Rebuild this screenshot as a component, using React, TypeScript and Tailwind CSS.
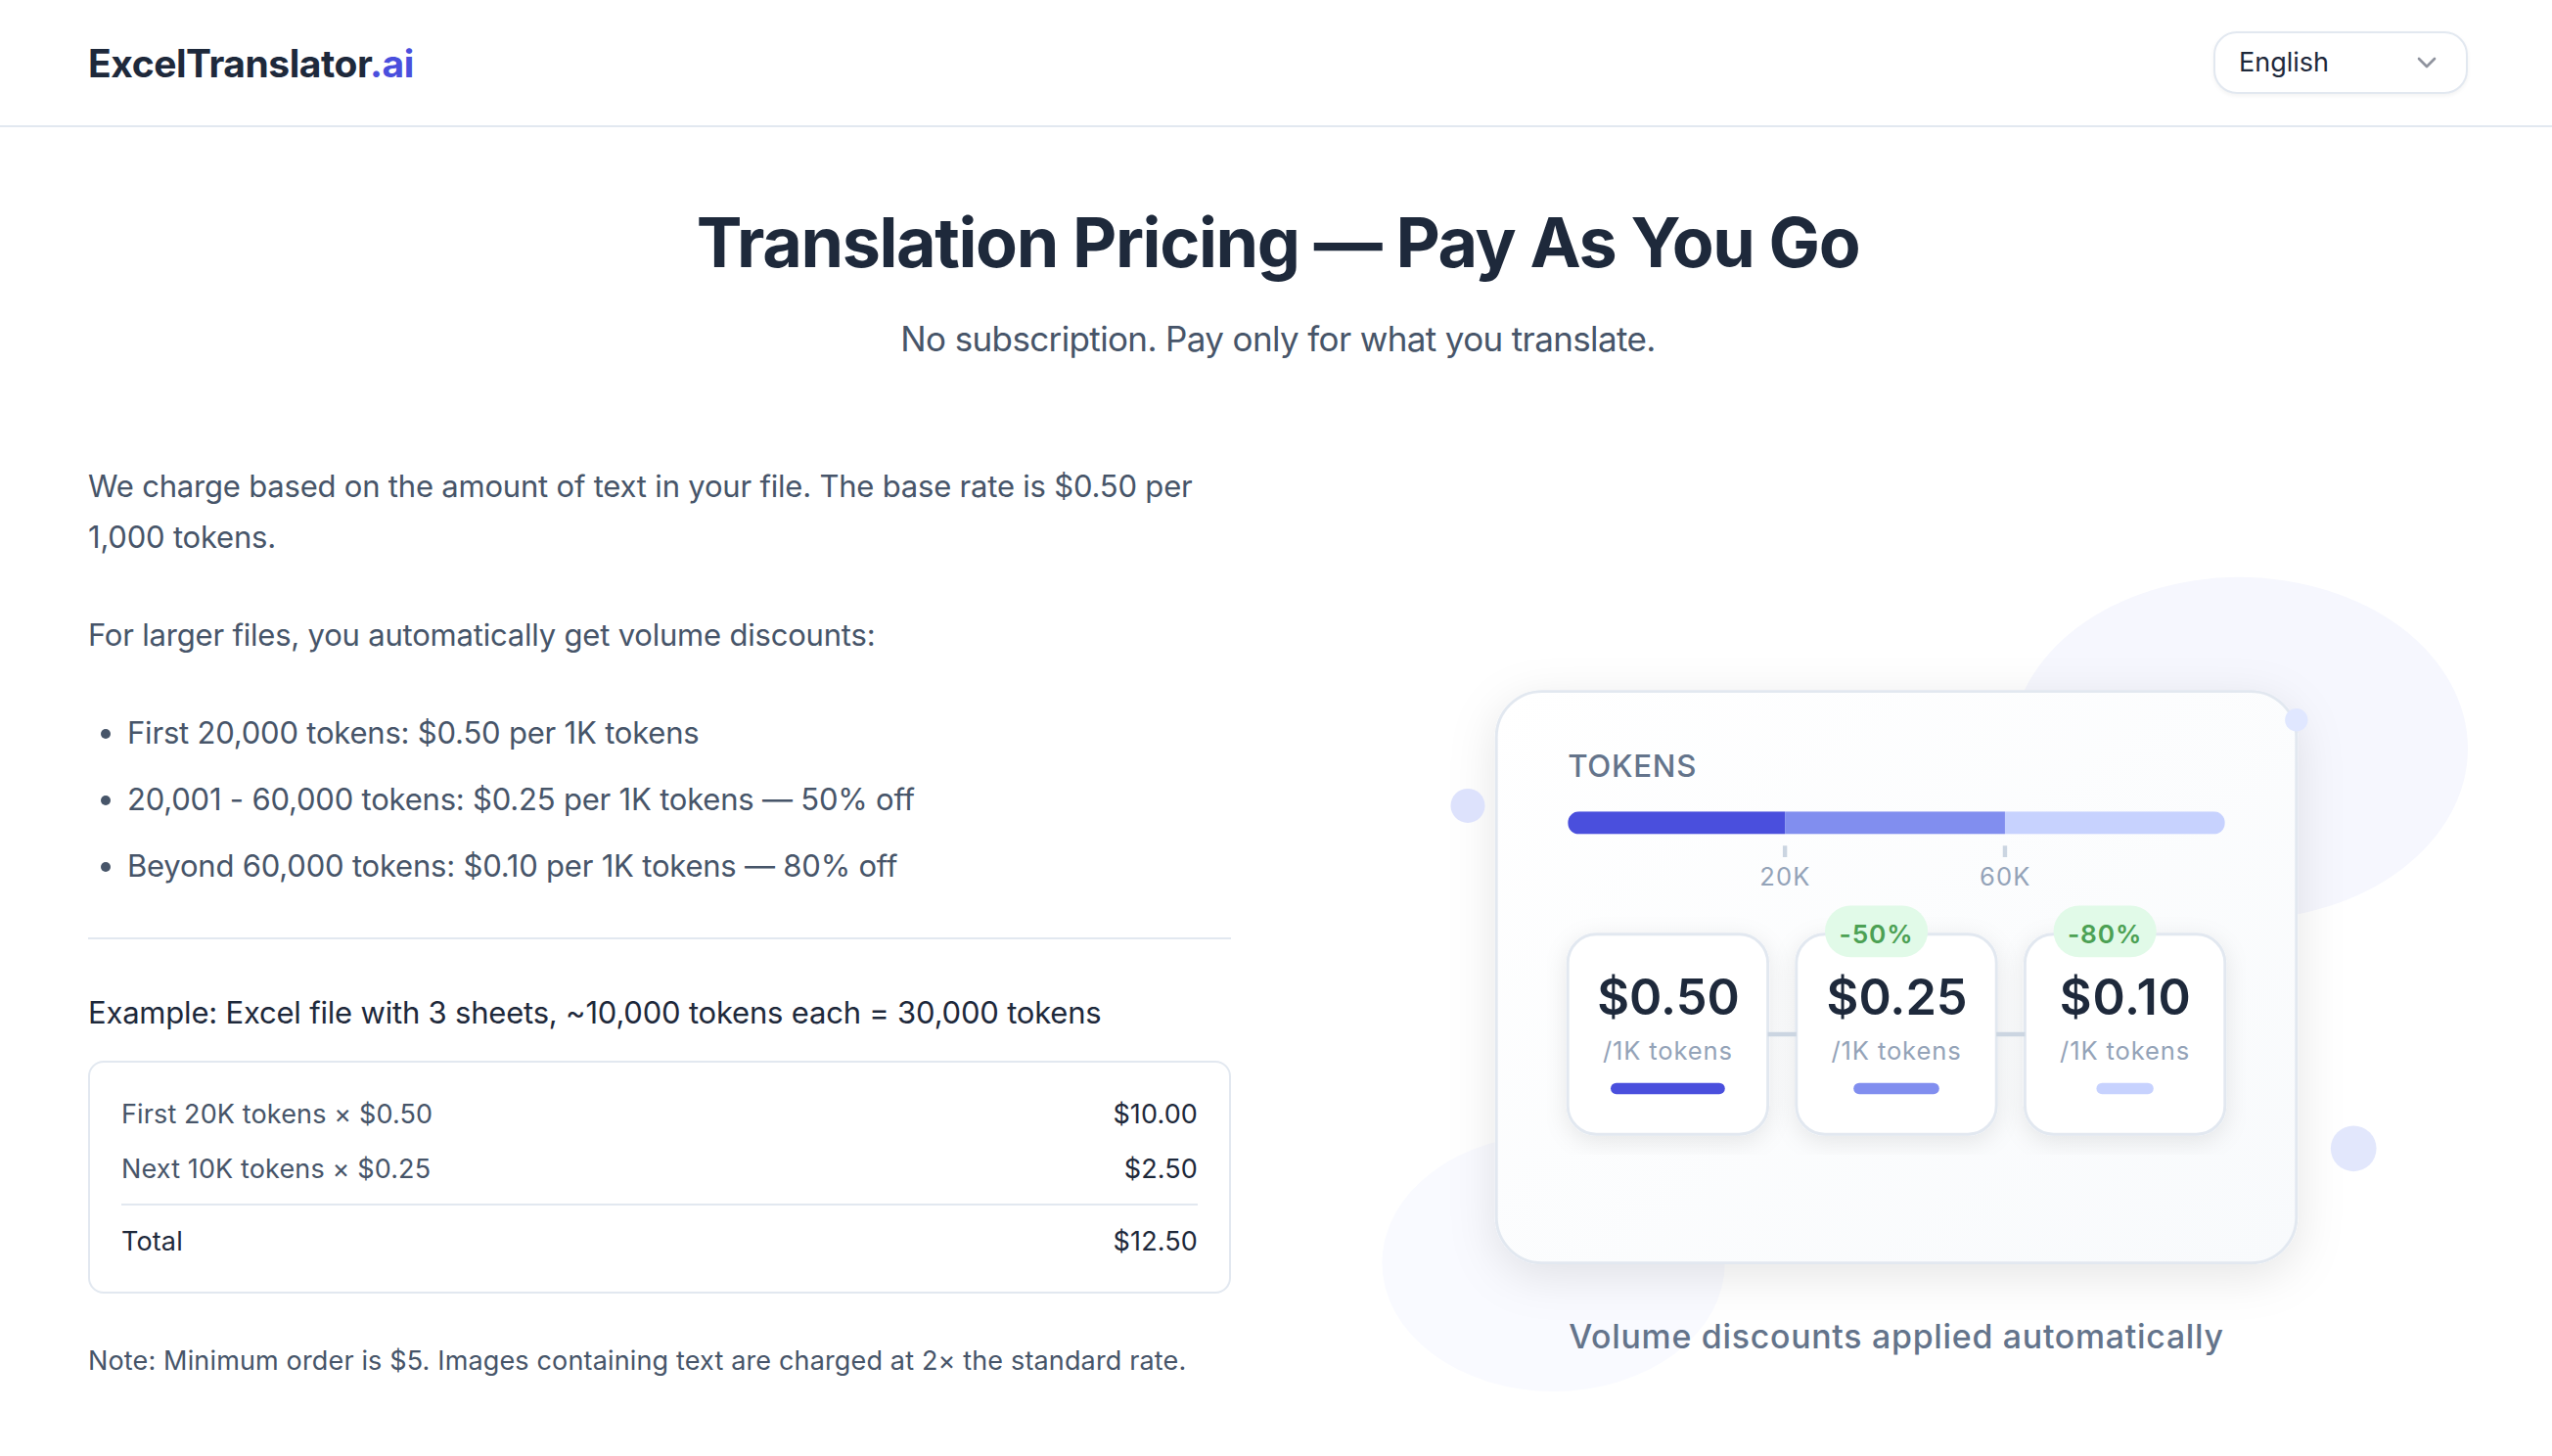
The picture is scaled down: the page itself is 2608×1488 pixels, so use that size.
import { ChevronDown } from 'lucide-react';

const tiers = [
  { x: 85, price: '$0.50', spacing: 0, bar: 40, color: '#4a4fdd', badge: null },
  { x: 165, price: '$0.25', spacing: 0, bar: 30, color: '#818eef', badge: '-50%' },
  { x: 245, price: '$0.10', spacing: 0.25, bar: 20, color: '#c7d2fe', badge: '-80%' },
];

const discounts = [
  'First 20,000 tokens: $0.50 per 1K tokens',
  '20,001 - 60,000 tokens: $0.25 per 1K tokens — 50% off',
  'Beyond 60,000 tokens: $0.10 per 1K tokens — 80% off',
];

function Header() {
  return (
    <header className="flex h-[130px] items-center justify-between border-b-2 border-[#e2e8f0] bg-white pl-[90px] pr-[86px]">
      <div className="pt-[1px] text-[39px] leading-[56px] font-bold tracking-[-0.45px] text-[#1e293b]">
        ExcelTranslator<span className="text-[#4a4fdd]">.ai</span>
      </div>
      <button className="flex h-16 w-[260px] items-center justify-between rounded-3xl border-2 border-[#e2e8f0] bg-white pr-6 pl-6 text-[27px] text-[#1e293b] shadow-[0_2px_4px_rgba(0,0,0,0.05)]">
        <span className="pt-px">English</span>
        <ChevronDown className="h-8 w-8 text-[#8f939e]" strokeWidth={2} />
      </button>
    </header>
  );
}

function PricingCopy() {
  return (
    <div className="text-[31px] leading-[52px] tracking-[-0.2px] text-[#475569]">
      <p>We charge based on the amount of text in your file. The base rate is $0.50 per 1,000 tokens.</p>
      <p className="mt-12">For larger files, you automatically get volume discounts:</p>
      <ul className="mt-12 flex list-disc flex-col gap-4 pl-10">
        {discounts.map((d) => (
          <li key={d}>{d}</li>
        ))}
      </ul>

      {/* Example */}
      <div className="mt-[47px] border-t-2 border-[#e2e8f0] pt-[49px]">
        <p className="text-[#1e293b]">Example: Excel file with 3 sheets, ~10,000 tokens each = 30,000 tokens</p>
        <div className="mt-[23px] flex flex-col gap-4 rounded-2xl border-2 border-[#e2e8f0] px-8 pt-[33px] pb-[31px] text-[27px] leading-10 tracking-[0.13px]">
          <div className="flex justify-between">
            <span>First 20K tokens × $0.50</span>
            <span className="text-[#1e293b]">$10.00</span>
          </div>
          <div className="flex justify-between">
            <span>Next 10K tokens × $0.25</span>
            <span className="text-[#1e293b]">$2.50</span>
          </div>
          <div className="-mt-px flex justify-between border-t-2 border-[#e2e8f0] pt-[17px] text-[#1e293b]">
            <span>Total</span>
            <span>$12.50</span>
          </div>
        </div>
      </div>

      <p className="mt-[49px] -mb-px text-[27px] leading-10 tracking-[0.15px]">
        Note: Minimum order is $5. Images containing text are charged at 2× the standard rate.
      </p>
    </div>
  );
}

function PricingIllustration() {
  return (
    <svg viewBox="0 0 400 320" className="mb-px w-full overflow-visible" fill="none">
      <defs>
        <linearGradient id="cardFill" x1="0" y1="0" x2="1" y2="1">
          <stop offset="0" stopColor="#ffffff" />
          <stop offset="1" stopColor="#f8fafc" />
        </linearGradient>
        <filter id="cardShadow">
          <feDropShadow dx="0" dy="4" stdDeviation="8" floodColor="#000" floodOpacity="0.1" />
        </filter>
        <filter id="tileShadow">
          <feDropShadow dx="0" dy="2" stdDeviation="4" floodColor="#000" floodOpacity="0.09" />
        </filter>
        <clipPath id="scale">
          <rect x="85" y="122" width="230" height="8" rx="4" />
        </clipPath>
      </defs>

      <ellipse cx="320" cy="100" rx="80" ry="60" fill="#f6f7fe" />
      <ellipse cx="80" cy="280" rx="60" ry="45" fill="#f9faff" />

      <rect x="60" y="80" width="280" height="200" rx="16" fill="url(#cardFill)" stroke="#e2e8f0" filter="url(#cardShadow)" />

      {/* Token scale */}
      <text x="85" y="110" fontSize="10.7" fontWeight="500" fill="#64748b" letterSpacing="0.25">TOKENS</text>
      <g clipPath="url(#scale)">
        <rect x="85" y="122" width="76" height="8" fill="#4a4fdd" />
        <rect x="161" y="122" width="77" height="8" fill="#818eef" />
        <rect x="238" y="122" width="77" height="8" fill="#c7d2fe" />
      </g>
      <path d="M161 134v4M238 134v4" stroke="#cbd5e1" strokeWidth="1.5" />
      <g fontSize="8.75" fill="#94a3b8" textAnchor="middle" letterSpacing="0.4">
        <text x="161.1" y="148">20K</text>
        <text x="238.1" y="148">60K</text>
      </g>

      {/* Tiers */}
      {tiers.map((t) => (
        <g key={t.x} textAnchor="middle">
          <rect x={t.x} y="165" width="70" height="70" rx="10" fill="#fff" stroke="#e2e8f0" filter="url(#tileShadow)" />
          <text x={t.x + 35.2} y="193.1" fontSize="17.3" fontWeight="600" fill="#1e293b" letterSpacing={t.spacing}>{t.price}</text>
          <text x={t.x + 35} y="209" fontSize="8.75" fill="#94a3b8" letterSpacing="0.3">/1K tokens</text>
          <rect x={t.x + 35 - t.bar / 2} y="217" width={t.bar} height="4" rx="2" fill={t.color} />
          {t.badge && (
            <>
              <rect x={t.x + 10} y="155" width="36" height="18" rx="9" fill="#e1fae8" />
              <text x={t.x + 28} y="168" fontSize="9" fontWeight="600" fill="#4ca154" letterSpacing="0.3">{t.badge}</text>
            </>
          )}
        </g>
      ))}
      <path d="M155 200h10M235 200h10" stroke="#cbd5e1" strokeWidth="1.5" />

      <circle cx="50" cy="120" r="6" fill="#dde2fc" />
      <circle cx="340" cy="90" r="4" fill="#e0e7ff" />
      <circle cx="360" cy="240" r="8" fill="#e2e7fc" />

      <text x="200" y="310" fontSize="11.6" fontWeight="500" fill="#64748b" textAnchor="middle" letterSpacing="0.25">
        Volume discounts applied automatically
      </text>
    </svg>
  );
}

export default function App() {
  return (
    <div className="min-h-[1488px] w-[2608px] overflow-hidden bg-white font-['Inter',sans-serif]">
      <Header />
      <main className="pt-[78px] pr-[86px] pl-[90px]">
        <div className="text-center">
          <h1 className="text-[70px] leading-[80px] font-bold tracking-[-1.4px] text-[#1e293b]">
            Translation Pricing — Pay As You Go
          </h1>
          <p className="mt-[30px] text-[35px] leading-[56px] tracking-[-0.63px] text-[#475569]">
            No subscription. Pay only for what you translate.
          </p>
        </div>
        <div className="mt-[97px] grid grid-cols-2 items-center gap-24">
          <PricingCopy />
          <PricingIllustration />
        </div>
      </main>
    </div>
  );
}
